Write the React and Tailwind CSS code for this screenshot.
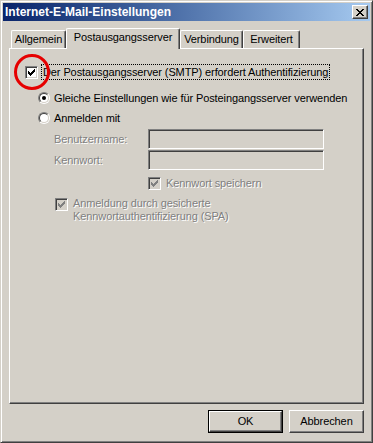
const raised =
  "border border-t-white border-l-white border-r-[#404040] border-b-[#404040] shadow-[inset_-1px_-1px_0_#808080,inset_1px_1px_0_#d4d0c8]";
const sunken =
  "border border-t-[#808080] border-l-[#808080] border-r-white border-b-white shadow-[inset_1px_1px_0_#404040,inset_-1px_-1px_0_#d4d0c8]";
const etched = "text-[#808080] [text-shadow:1px_1px_0_#fff]";

function Check({ disabled }) {
  return (
    <div
      className={`${sunken} w-[13px] h-[13px] shrink-0 flex items-center justify-center ${
        disabled ? "bg-[#d4d0c8]" : "bg-white"
      }`}
    >
      <svg width="7" height="7" viewBox="0 0 7 7" shapeRendering="crispEdges">
        <path
          d="M6 0h1v3H6zM5 1h1v3H5zM4 2h1v3H4zM3 3h1v3H3zM2 4h1v3H2zM1 3h1v3H1zM0 2h1v3H0z"
          fill={disabled ? "#808080" : "#000"}
        />
      </svg>
    </div>
  );
}

function Radio({ checked }) {
  return (
    <div className="w-[12px] h-[12px] shrink-0 rounded-full border border-t-[#808080] border-l-[#808080] border-r-white border-b-white">
      <div className="w-full h-full rounded-full bg-white border border-t-[#404040] border-l-[#404040] border-r-[#d4d0c8] border-b-[#d4d0c8] flex items-center justify-center">
        {checked && <div className="w-[4px] h-[4px] rounded-full bg-black" />}
      </div>
    </div>
  );
}

function Tab({ label, w, active }) {
  return (
    <div
      className={`${w} flex items-center justify-center border-t border-l border-r border-t-white border-l-white border-r-[#404040] rounded-t-[2px] shadow-[inset_-1px_0_0_#808080] bg-[#d4d0c8] ${
        active ? "h-[21px] -mb-px relative z-10" : "h-[18px]"
      }`}
    >
      <span className={active ? "pb-[3px]" : ""}>{label}</span>
    </div>
  );
}

export default function App() {
  return (
    <div
      className="relative w-[373px] h-[443px] bg-[#d4d0c8] border border-t-[#d4d0c8] border-l-[#d4d0c8] border-r-[#404040] border-b-[#404040] shadow-[inset_1px_1px_0_#fff,inset_-1px_-1px_0_#808080] p-[2px] flex flex-col text-[11px] leading-[13px] tracking-[-0.1px] text-black overflow-hidden"
      style={{ fontFamily: '"Liberation Sans", Arial, sans-serif' }}
    >
      {/* title bar */}
      <div className="h-[18px] shrink-0 flex items-center bg-gradient-to-r from-[#0a246a] to-[#a6caf0] pl-[2px] pr-[2px]">
        <span className="text-white font-bold text-[12px] tracking-normal flex-1">Internet-E-Mail-Einstellungen</span>
        <div className={`${raised} w-[16px] h-[14px] bg-[#d4d0c8] flex items-center justify-center`}>
          <svg width="8" height="7" viewBox="0 0 8 7" shapeRendering="crispEdges">
            <path
              d="M0 0h2v1H0zM6 0h2v1H6zM1 1h2v1H1zM5 1h2v1H5zM2 2h4v1H2zM3 3h2v1H3zM2 4h4v1H2zM1 5h2v1H1zM5 5h2v1H5zM0 6h2v1H0zM6 6h2v1H6z"
              fill="#000"
            />
          </svg>
        </div>
      </div>

      {/* tabs */}
      <div className="h-[27px] shrink-0 flex items-end ml-[8px]">
        <Tab label="Allgemein" w="w-[55px]" />
        <Tab label="Postausgangsserver" w="w-[114px]" active />
        <Tab label="Verbindung" w="w-[63px]" />
        <Tab label="Erweitert" w="w-[57px]" />
      </div>

      {/* panel */}
      <div className="mx-[6px] h-[356px] shrink-0 border border-t-white border-l-white border-r-[#404040] border-b-[#404040] shadow-[inset_-1px_-1px_0_#808080] flex flex-col">
        <div className="flex items-center h-[16px] mt-[15px] ml-[15px]">
          <Check />
          <span className="ml-[3px] h-[16px] flex items-center px-[1px] border border-dotted border-black">
            Der Postausgangsserver (SMTP) erfordert Authentifizierung
          </span>
        </div>

        <div className="flex items-center h-[16px] mt-[10px] ml-[28px] gap-[4px]">
          <Radio checked />
          <span>Gleiche Einstellungen wie für Posteingangsserver verwenden</span>
        </div>
        <div className="flex items-center h-[16px] mt-[4px] ml-[28px] gap-[4px]">
          <Radio />
          <span>Anmelden mit</span>
        </div>

        <div className="flex items-center h-[20px] mt-[3px] ml-[44px]">
          <span className={`${etched} w-[94px]`}>Benutzername:</span>
          <div className={`${sunken} w-[176px] h-[20px] bg-[#d4d0c8]`} />
        </div>
        <div className="flex items-center h-[20px] mt-[1px] ml-[44px]">
          <span className={`${etched} w-[94px]`}>Kennwort:</span>
          <div className={`${sunken} w-[176px] h-[20px] bg-[#d4d0c8]`} />
        </div>

        <div className="flex items-center h-[13px] mt-[7px] ml-[138px] gap-[5px]">
          <Check disabled />
          <span className={etched}>Kennwort speichern</span>
        </div>

        <div className="flex items-start mt-[8px] ml-[45px] gap-[5px]">
          <Check disabled />
          <span className={`${etched} -mt-px`}>
            Anmeldung durch gesicherte
            <br />
            Kennwortauthentifizierung (SPA)
          </span>
        </div>
      </div>

      {/* buttons */}
      <div className="flex justify-end gap-[6px] mt-[6px] mr-[6px]">
        <div className="w-[75px] h-[23px] border border-black">
          <div className={`${raised} w-full h-full bg-[#d4d0c8] flex items-center justify-center`}>OK</div>
        </div>
        <div className={`${raised} w-[75px] h-[23px] bg-[#d4d0c8] flex items-center justify-center`}>
          Abbrechen
        </div>
      </div>

      {/* red marker circle */}
      <svg className="absolute left-[12px] top-[52px]" width="38" height="38" viewBox="0 0 38 38">
        <circle cx="19" cy="19" r="16.5" fill="none" stroke="#e60000" strokeWidth="3" />
      </svg>
    </div>
  );
}
